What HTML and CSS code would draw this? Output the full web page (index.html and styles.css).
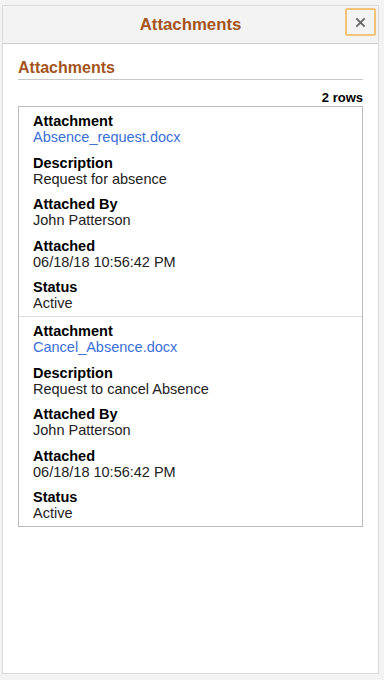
FILE: index.html
```html
<!DOCTYPE html>
<html lang="en">
<head>
    <meta charset="UTF-8">
    <meta name="viewport" content="width=device-width, initial-scale=1.0">
    <title>Attachments</title>
    <link rel="stylesheet" href="styles.css">
</head>
<body>
    <div class="modal">
        <div class="modal-header">
            <h1 class="modal-title">Attachments</h1>
            <button class="close-button" aria-label="Close">
                <svg class="close-icon" viewBox="0 0 12 12">
                    <path d="M1.5 1.5l9 9M10.5 1.5l-9 9"/>
                </svg>
            </button>
        </div>

        <div class="modal-body">
            <h2 class="section-title">Attachments</h2>
            <p class="row-count">2 rows</p>

            <div class="grid">
                <div class="grid-row">
                    <div class="field">
                        <div class="field-label">Attachment</div>
                        <a class="field-link" href="#">Absence_request.docx</a>
                    </div>
                    <div class="field">
                        <div class="field-label">Description</div>
                        <div class="field-value">Request for absence</div>
                    </div>
                    <div class="field">
                        <div class="field-label">Attached By</div>
                        <div class="field-value">John Patterson</div>
                    </div>
                    <div class="field">
                        <div class="field-label">Attached</div>
                        <div class="field-value">06/18/18 10:56:42 PM</div>
                    </div>
                    <div class="field">
                        <div class="field-label">Status</div>
                        <div class="field-value">Active</div>
                    </div>
                </div>

                <div class="grid-row">
                    <div class="field">
                        <div class="field-label">Attachment</div>
                        <a class="field-link" href="#">Cancel_Absence.docx</a>
                    </div>
                    <div class="field">
                        <div class="field-label">Description</div>
                        <div class="field-value">Request to cancel Absence</div>
                    </div>
                    <div class="field">
                        <div class="field-label">Attached By</div>
                        <div class="field-value">John Patterson</div>
                    </div>
                    <div class="field">
                        <div class="field-label">Attached</div>
                        <div class="field-value">06/18/18 10:56:42 PM</div>
                    </div>
                    <div class="field">
                        <div class="field-label">Status</div>
                        <div class="field-value">Active</div>
                    </div>
                </div>
            </div>
        </div>
    </div>
</body>
</html>
```

FILE: styles.css
```css
* {
    margin: 0;
    padding: 0;
    box-sizing: border-box;
}

body {
    font-family: "Liberation Sans", Arial, sans-serif;
    background-color: #f3f3f3;
    color: #000;
    padding: 5px 5px 6px 2px;
}

.modal {
    width: 377px;
    height: 669px;
    background: #ffffff;
    border: 1px solid #d9d9d9;
    display: flex;
    flex-direction: column;
}

.modal-header {
    display: grid;
    grid-template-columns: 1fr auto 1fr;
    align-items: start;
    height: 38px;
    background: #f3f3f3;
    border-bottom: 1px solid #cccccc;
}

.modal-title {
    grid-column: 2;
    font-size: 16.8px;
    font-weight: bold;
    color: #a4541c;
    line-height: 38px;
}

.close-button {
    grid-column: 3;
    justify-self: end;
    width: 31px;
    height: 28px;
    margin: 2px 2px 0 0;
    border: 2px solid #f1c27a;
    border-radius: 2px;
    background: #f3f3f3;
    display: flex;
    align-items: center;
    justify-content: center;
    cursor: pointer;
}

.close-icon {
    width: 11px;
    height: 11px;
    fill: none;
    stroke: #666666;
    stroke-width: 2;
}

.modal-body {
    padding: 14px 15px 0 15px;
}

.section-title {
    font-size: 16px;
    font-weight: bold;
    color: #a4541c;
    line-height: 20px;
    padding-bottom: 1px;
    border-bottom: 1px solid #c8c8c8;
}

.row-count {
    font-size: 13px;
    font-weight: bold;
    text-align: right;
    line-height: 16px;
    margin-top: 10px;
}

.grid {
    border: 1px solid #bbbbbb;
}

.grid-row {
    padding: 6px 0 5px 14px;
}

.grid-row + .grid-row {
    border-top: 1px solid #dddddd;
}

.field {
    display: flex;
    flex-direction: column;
    align-items: flex-start;
    font-size: 14.5px;
    line-height: 16px;
}

.field + .field {
    margin-top: 9.5px;
}

.field-label {
    font-weight: bold;
}

.field-value {
    color: #222222;
}

.field-link {
    color: #3b70d6;
    text-decoration: none;
}
```
